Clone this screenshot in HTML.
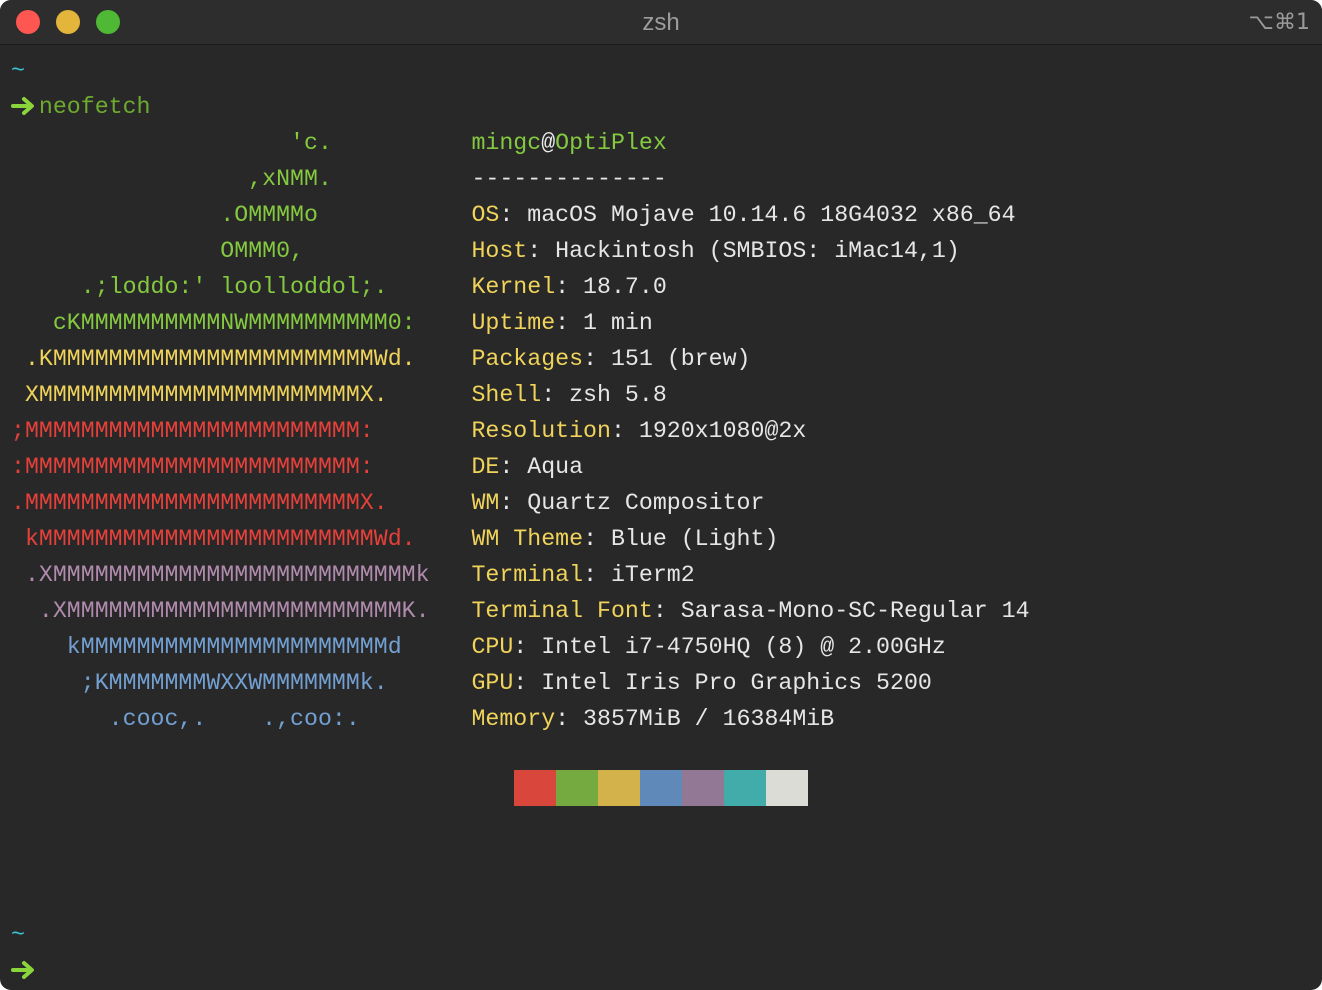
<!DOCTYPE html>
<html><head><meta charset="utf-8"><style>
html,body{margin:0;padding:0;background:#fff;width:1322px;height:990px;overflow:hidden}
.win{position:absolute;left:0;top:0;width:1322px;height:990px;background:#282828;border-radius:11px;overflow:hidden}
.tb{position:absolute;left:0;top:0;width:1322px;height:44px;background:#2d2d2d;border-bottom:1px solid #1c1c1c}
.dot{position:absolute;top:10px;width:24px;height:24px;border-radius:50%}
.title{position:absolute;top:0;left:0;width:1322px;text-align:center;font-family:"Liberation Sans",sans-serif;font-size:24px;line-height:46px;color:#9c9c9c}
.sc{position:absolute;right:12px;top:0;font-family:"DejaVu Sans",sans-serif;font-size:22px;line-height:46px;color:#9a9a9a}
pre{position:absolute;left:11px;top:53px;margin:0;font-family:"Liberation Mono",monospace;font-size:23.25px;line-height:36px;color:#e6e6e6}
.c{color:#38c8d8}.n{color:#6eaa30}
.g{color:#84c93f}.y{color:#efd35a}.r{color:#e5403a}.p{color:#b08bad}.b{color:#73a0d2}
.k{color:#efd35a}.w{color:#eaeaea}
.ar{display:inline-block;width:27.9px;height:20px;vertical-align:-3px}
.sw{position:absolute;top:770px;width:42px;height:36px}
</style></head><body><div class="win">
<div class="tb"><div class="dot" style="left:16px;background:#fe5650"></div><div class="dot" style="left:56px;background:#e3b53b"></div><div class="dot" style="left:96px;background:#4fb935"></div>
<div class="title">zsh</div><div class="sc">⌥⌘1</div></div>
<pre><span class="c">~</span>
<svg class="ar" viewBox="0 0 28 20"><path d="M2 10H20M13 3L21 10L13 17" fill="none" stroke="#8ad43c" stroke-width="4" stroke-linecap="round" stroke-linejoin="round"/></svg><span class="n">neofetch</span>
<span class="g">                    'c.          </span><span class="g">mingc</span><span class="w">@</span><span class="g">OptiPlex</span>
<span class="g">                 ,xNMM.          </span>--------------
<span class="g">               .OMMMMo           </span><span class="k">OS</span>: macOS Mojave 10.14.6 18G4032 x86_64
<span class="g">               OMMM0,            </span><span class="k">Host</span>: Hackintosh (SMBIOS: iMac14,1)
<span class="g">     .;loddo:' loolloddol;.      </span><span class="k">Kernel</span>: 18.7.0
<span class="g">   cKMMMMMMMMMMNWMMMMMMMMMM0:    </span><span class="k">Uptime</span>: 1 min
<span class="y"> .KMMMMMMMMMMMMMMMMMMMMMMMWd.    </span><span class="k">Packages</span>: 151 (brew)
<span class="y"> XMMMMMMMMMMMMMMMMMMMMMMMX.      </span><span class="k">Shell</span>: zsh 5.8
<span class="r">;MMMMMMMMMMMMMMMMMMMMMMMM:       </span><span class="k">Resolution</span>: 1920x1080@2x
<span class="r">:MMMMMMMMMMMMMMMMMMMMMMMM:       </span><span class="k">DE</span>: Aqua
<span class="r">.MMMMMMMMMMMMMMMMMMMMMMMMX.      </span><span class="k">WM</span>: Quartz Compositor
<span class="r"> kMMMMMMMMMMMMMMMMMMMMMMMMWd.    </span><span class="k">WM Theme</span>: Blue (Light)
<span class="p"> .XMMMMMMMMMMMMMMMMMMMMMMMMMMk   </span><span class="k">Terminal</span>: iTerm2
<span class="p">  .XMMMMMMMMMMMMMMMMMMMMMMMMK.   </span><span class="k">Terminal Font</span>: Sarasa-Mono-SC-Regular 14
<span class="b">    kMMMMMMMMMMMMMMMMMMMMMMd     </span><span class="k">CPU</span>: Intel i7-4750HQ (8) @ 2.00GHz
<span class="b">     ;KMMMMMMMWXXWMMMMMMMk.      </span><span class="k">GPU</span>: Intel Iris Pro Graphics 5200
<span class="b">       .cooc,.    .,coo:.        </span><span class="k">Memory</span>: 3857MiB / 16384MiB





<span class="c">~</span>
<svg class="ar" viewBox="0 0 28 20"><path d="M2 10H20M13 3L21 10L13 17" fill="none" stroke="#8ad43c" stroke-width="4" stroke-linecap="round" stroke-linejoin="round"/></svg></pre>
<div class="sw" style="left:514px;background:#d9473c"></div>
<div class="sw" style="left:556px;background:#74aa3f"></div>
<div class="sw" style="left:598px;background:#d3b24b"></div>
<div class="sw" style="left:640px;background:#5f89b9"></div>
<div class="sw" style="left:682px;background:#937896"></div>
<div class="sw" style="left:724px;background:#42acab"></div>
<div class="sw" style="left:766px;background:#dcdcd6"></div>
</div></body></html>
